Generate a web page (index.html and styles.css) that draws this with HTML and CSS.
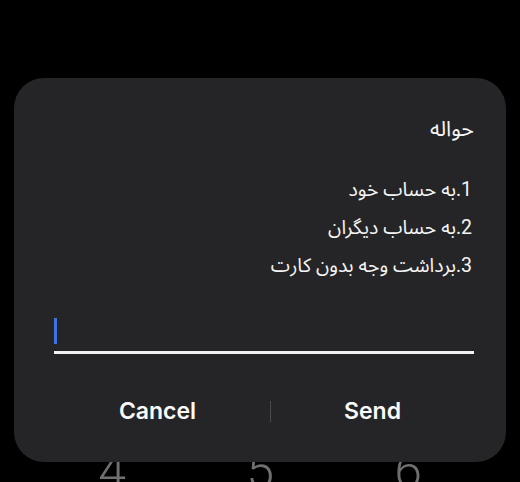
FILE: index.html
```html
<!DOCTYPE html>
<html lang="fa">
<head>
<meta charset="utf-8">
<title>حواله</title>
<link rel="stylesheet" href="styles.css">
</head>
<body>
<div class="screen">
  <div class="dialpad">
    <span class="key">4</span>
    <span class="key">5</span>
    <span class="key">6</span>
  </div>
  <div class="dialog" role="dialog">
    <div class="title" dir="rtl">حواله</div>
    <div class="menu" dir="rtl">
      <div class="item">1.به حساب خود</div>
      <div class="item">2.به حساب دیگران</div>
      <div class="item">3.برداشت وجه بدون کارت</div>
    </div>
    <div class="field"><span class="caret"></span></div>
    <div class="actions">
      <span class="btn">Cancel</span>
      <span class="sep"></span>
      <span class="btn">Send</span>
    </div>
  </div>
</div>
</body>
</html>
```
FILE: styles.css
```css
html, body {
  margin: 0;
  padding: 0;
  background: #000;
}
.screen {
  position: relative;
  width: 520px;
  height: 482px;
  overflow: hidden;
  background: #000;
}
.dialpad {
  display: grid;
  grid-template-columns: repeat(3, 148px);
  justify-content: center;
  padding-top: 446px;
}
.key {
  text-align: center;
  font-family: Roboto, sans-serif;
  font-weight: 300;
  font-size: 50px;
  line-height: 50px;
  color: #6f6f6f;
}
.dialog {
  position: absolute;
  left: 14px;
  top: 78px;
  width: 492px;
  height: 384px;
  box-sizing: border-box;
  background: #252527;
  border-radius: 30px;
  padding: 38px 32px 0 40px;
  color: #f5f5f5;
  font-family: Roboto, "Noto Sans Arabic", "DejaVu Sans", sans-serif;
}
.title {
  font-size: 21.5px;
  line-height: 26px;
  text-align: right;
}
.menu {
  margin-top: 29px;
  font-size: 19.5px;
  line-height: 38px;
}
.item {
  padding-right: 2px;
}
.field {
  margin-top: 20px;
  height: 33px;
  padding-top: 13px;
  border-bottom: 3px solid #f2f2f2;
}
.caret {
  display: block;
  width: 3px;
  height: 26px;
  background: #3f73e0;
}
.actions {
  display: grid;
  grid-template-columns: 225px 1px 1fr;
  align-items: center;
  height: 56px;
  margin: 29px 0 0 -9px;
  font-family: Inter, "Liberation Sans", sans-serif;
  font-weight: 600;
  font-size: 23px;
  color: #fafafa;
}
.btn {
  text-align: center;
}
.sep {
  height: 21px;
  background: #4a4a4c;
}
```
